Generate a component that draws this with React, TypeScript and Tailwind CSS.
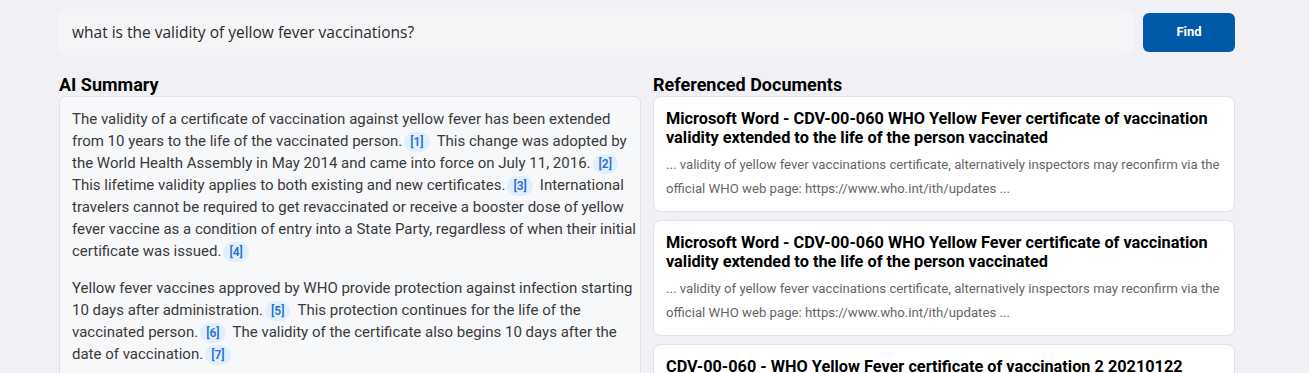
import { useState } from "react";

const docs = [
  {
    title:
      "Microsoft Word - CDV-00-060 WHO Yellow Fever certificate of vaccination validity extended to the life of the person vaccinated",
    snippet:
      "... validity of yellow fever vaccinations certificate, alternatively inspectors may reconfirm via the official WHO web page: https://www.who.int/ith/updates ...",
  },
  {
    title:
      "Microsoft Word - CDV-00-060 WHO Yellow Fever certificate of vaccination validity extended to the life of the person vaccinated",
    snippet:
      "... validity of yellow fever vaccinations certificate, alternatively inspectors may reconfirm via the official WHO web page: https://www.who.int/ith/updates ...",
  },
  {
    title: "CDV-00-060 - WHO Yellow Fever certificate of vaccination 2 20210122",
    snippet:
      "... validity of yellow fever vaccinations certificate, alternatively inspectors may reconfirm via the official WHO web page ...",
  },
];

function Cite({ n }: { n: number }) {
  return (
    <span className="inline-block ml-[2px] mr-[7px] px-[6px] leading-[20px] rounded-full bg-[#e1effc] text-[#2a6fd0] text-[12px] font-semibold align-baseline">
      [{n}]
    </span>
  );
}

export default function App() {
  const [query, setQuery] = useState("what is the validity of yellow fever vaccinations?");

  return (
    <div className="min-h-screen bg-[#f1f1f5] font-['Roboto',sans-serif] text-[#222]">
      <div className="ml-[58px] mr-[74px] pt-[9px]">
        {/* Search bar */}
        <div className="flex items-center gap-[10px]">
          <input
            value={query}
            onChange={(e) => setQuery(e.target.value)}
            className="flex-1 h-[46px] rounded-[8px] bg-[#f5f5f7] px-[14px] text-[15.5px] text-[#2a2a2a] font-['Open_Sans',sans-serif] outline-none"
          />
          <button className="w-[92px] h-[39px] rounded-[6px] bg-[#005aa7] text-white text-[13px] font-bold">
            Find
          </button>
        </div>

        {/* Results */}
        <div className="grid grid-cols-2 gap-[12px] mt-[19px] ml-[1px]">
          {/* Summary */}
          <div>
            <h2 className="text-[18px] font-bold leading-[22px] text-black">AI Summary</h2>
            <div className="rounded-[6px] border border-[#e2e3e7] bg-[#f7f8fa] pl-[12px] pr-[4px] pt-[11px] pb-4 text-[15px] leading-[22px] text-[#3a3a3a]">
              <p>
                The validity of a certificate of vaccination against yellow fever has been extended
                from 10 years to the life of the vaccinated person.
                <Cite n={1} />
                This change was adopted by the World Health Assembly in May 2014 and came into force
                on July 11, 2016.
                <Cite n={2} />
                This lifetime validity applies to both existing and new certificates.
                <Cite n={3} />
                International travelers cannot be required to get revaccinated or receive a booster
                dose of yellow fever vaccine as a condition of entry into a State Party, regardless of
                when their initial certificate was issued.
                <Cite n={4} />
              </p>
              <p className="mt-[15px]">
                Yellow fever vaccines approved by WHO provide protection against infection starting 10
                days after administration.
                <Cite n={5} />
                This protection continues for the life of the vaccinated person.
                <Cite n={6} />
                The validity of the certificate also begins 10 days after the date of vaccination.
                <Cite n={7} />
              </p>
            </div>
          </div>

          {/* Documents */}
          <div>
            <h2 className="text-[18px] font-bold leading-[22px] text-black">Referenced Documents</h2>
            <div className="flex flex-col gap-[8px]">
              {docs.map((d, i) => (
                <div
                  key={i}
                  className="rounded-[8px] border border-[#e2e3e7] bg-white px-[12px] pt-[12px] pb-[11px]"
                >
                  <h3 className="text-[16.3px] font-bold leading-[19px] text-black">{d.title}</h3>
                  <p className="mt-[6px] text-[13.2px] leading-[23.5px] text-[#666]">{d.snippet}</p>
                </div>
              ))}
            </div>
          </div>
        </div>
      </div>
    </div>
  );
}
